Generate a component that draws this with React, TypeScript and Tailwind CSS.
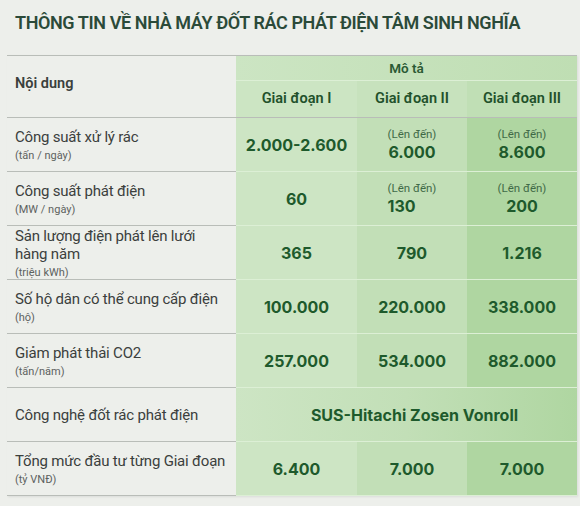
import React from 'react';

type Cell = { top?: string; value: string; align?: 'left' | 'center' };
type Row = { label: string[]; sub?: string; cells: Cell[] | string };

const ROWS: Row[] = [
  {
    label: ['Công suất xử lý rác'],
    sub: '(tấn / ngày)',
    cells: [{ value: '2.000-2.600' }, { top: '(Lên đến)', value: '6.000' }, { top: '(Lên đến)', value: '8.600' }],
  },
  {
    label: ['Công suất phát điện'],
    sub: '(MW / ngày)',
    cells: [{ value: '60' }, { top: '(Lên đến)', value: '130', align: 'left' }, { top: '(Lên đến)', value: '200' }],
  },
  {
    label: ['Sản lượng điện phát lên lưới', 'hàng năm'],
    sub: '(triệu kWh)',
    cells: [{ value: '365' }, { value: '790' }, { value: '1.216' }],
  },
  {
    label: ['Số hộ dân có thể cung cấp điện'],
    sub: '(hộ)',
    cells: [{ value: '100.000' }, { value: '220.000' }, { value: '338.000' }],
  },
  {
    label: ['Giảm phát thải CO2'],
    sub: '(tấn/năm)',
    cells: [{ value: '257.000' }, { value: '534.000' }, { value: '882.000' }],
  },
  { label: ['Công nghệ đốt rác phát điện'], cells: 'SUS-Hitachi Zosen Vonroll' },
  {
    label: ['Tổng mức đầu tư từng Giai đoạn'],
    sub: '(tỷ VNĐ)',
    cells: [{ value: '6.400' }, { value: '7.000' }, { value: '7.000' }],
  },
];

const colBg = ['bg-[#cde5c4]', 'bg-[#c2dfb7]', 'bg-[#afd6a1]'];
const num = "font-['Inter',sans-serif] text-[16px] font-bold text-[#1e5a2c]";

function ValueCell({ cell, i }: { cell: Cell; i: number }) {
  return (
    <div className={`flex h-[54px] items-center justify-center border-b border-[#dcefd5] ${colBg[i]}`}>
      {cell.top ? (
        <div className={`flex flex-col ${cell.align === 'left' ? 'items-start' : 'items-center'}`}>
          <span className="text-[11.5px] leading-[14px] text-[#3f6a47]">{cell.top}</span>
          <span className={`${num} leading-[22px]`}>{cell.value}</span>
        </div>
      ) : (
        <span className={num}>{cell.value}</span>
      )}
    </div>
  );
}

export default function App() {
  return (
    <div className="h-[506px] w-[580px] overflow-hidden bg-[#edefeb] font-['Roboto',sans-serif]">
      <h1 className="pl-[15px] pt-[9px] text-[18px] font-semibold leading-[28px] tracking-[-0.4px] text-[#2b4a39]">
        THÔNG TIN VỀ NHÀ MÁY ĐỐT RÁC PHÁT ĐIỆN TÂM SINH NGHĨA
      </h1>

      <div className="ml-[7px] mt-[18px] grid w-[570px] grid-cols-[229px_121px_110px_110px] border-t border-[#b9bdb8] shadow-[1px_1px_2px_rgba(0,0,0,0.08)]">
        {/* header */}
        <div className="row-span-2 border-b border-[#b9bdb8] pl-2 pt-[17px] text-[14.5px] font-semibold text-[#3a403c]">
          Nội dung
        </div>
        <div className="col-span-3 flex h-[25px] items-center justify-center border-b border-[#dcefd5] bg-gradient-to-r from-[#cce5c3] to-[#bfdeb3] text-[13.5px] font-semibold text-[#2b5a34]">
          Mô tả
        </div>
        {['Giai đoạn I', 'Giai đoạn II', 'Giai đoạn III'].map((h, i) => (
          <div
            key={h}
            className={`flex h-[37px] items-center justify-center border-b border-[#b9bdb8] text-[14.5px] font-semibold text-[#22512b] ${
              ['bg-[#cce5c3]', 'bg-[#c7e2bd]', 'bg-[#c0dfb5]'][i]
            }`}
          >
            {h}
          </div>
        ))}

        {ROWS.map((r) => (
          <React.Fragment key={r.label[0]}>
            <div className="flex h-[54px] flex-col justify-center border-b border-[#b9bdb8] pl-2">
              {r.label.map((l) => (
                <span
                  key={l}
                  className="whitespace-nowrap text-[15px] leading-[18px] tracking-[-0.2px] text-[#3b403d]"
                >
                  {l}
                </span>
              ))}
              {r.sub && <span className="mt-[3px] text-[11px] leading-[13px] text-[#5d625f]">{r.sub}</span>}
            </div>
            {typeof r.cells === 'string' ? (
              <div
                className={`col-span-3 flex h-[54px] items-center justify-center border-b border-[#dcefd5] bg-gradient-to-r from-[#cde5c4] via-[#c2dfb7] to-[#afd6a1] pl-4 ${num}`}
              >
                {r.cells}
              </div>
            ) : (
              r.cells.map((c, i) => <ValueCell key={i} cell={c} i={i} />)
            )}
          </React.Fragment>
        ))}
      </div>
    </div>
  );
}
